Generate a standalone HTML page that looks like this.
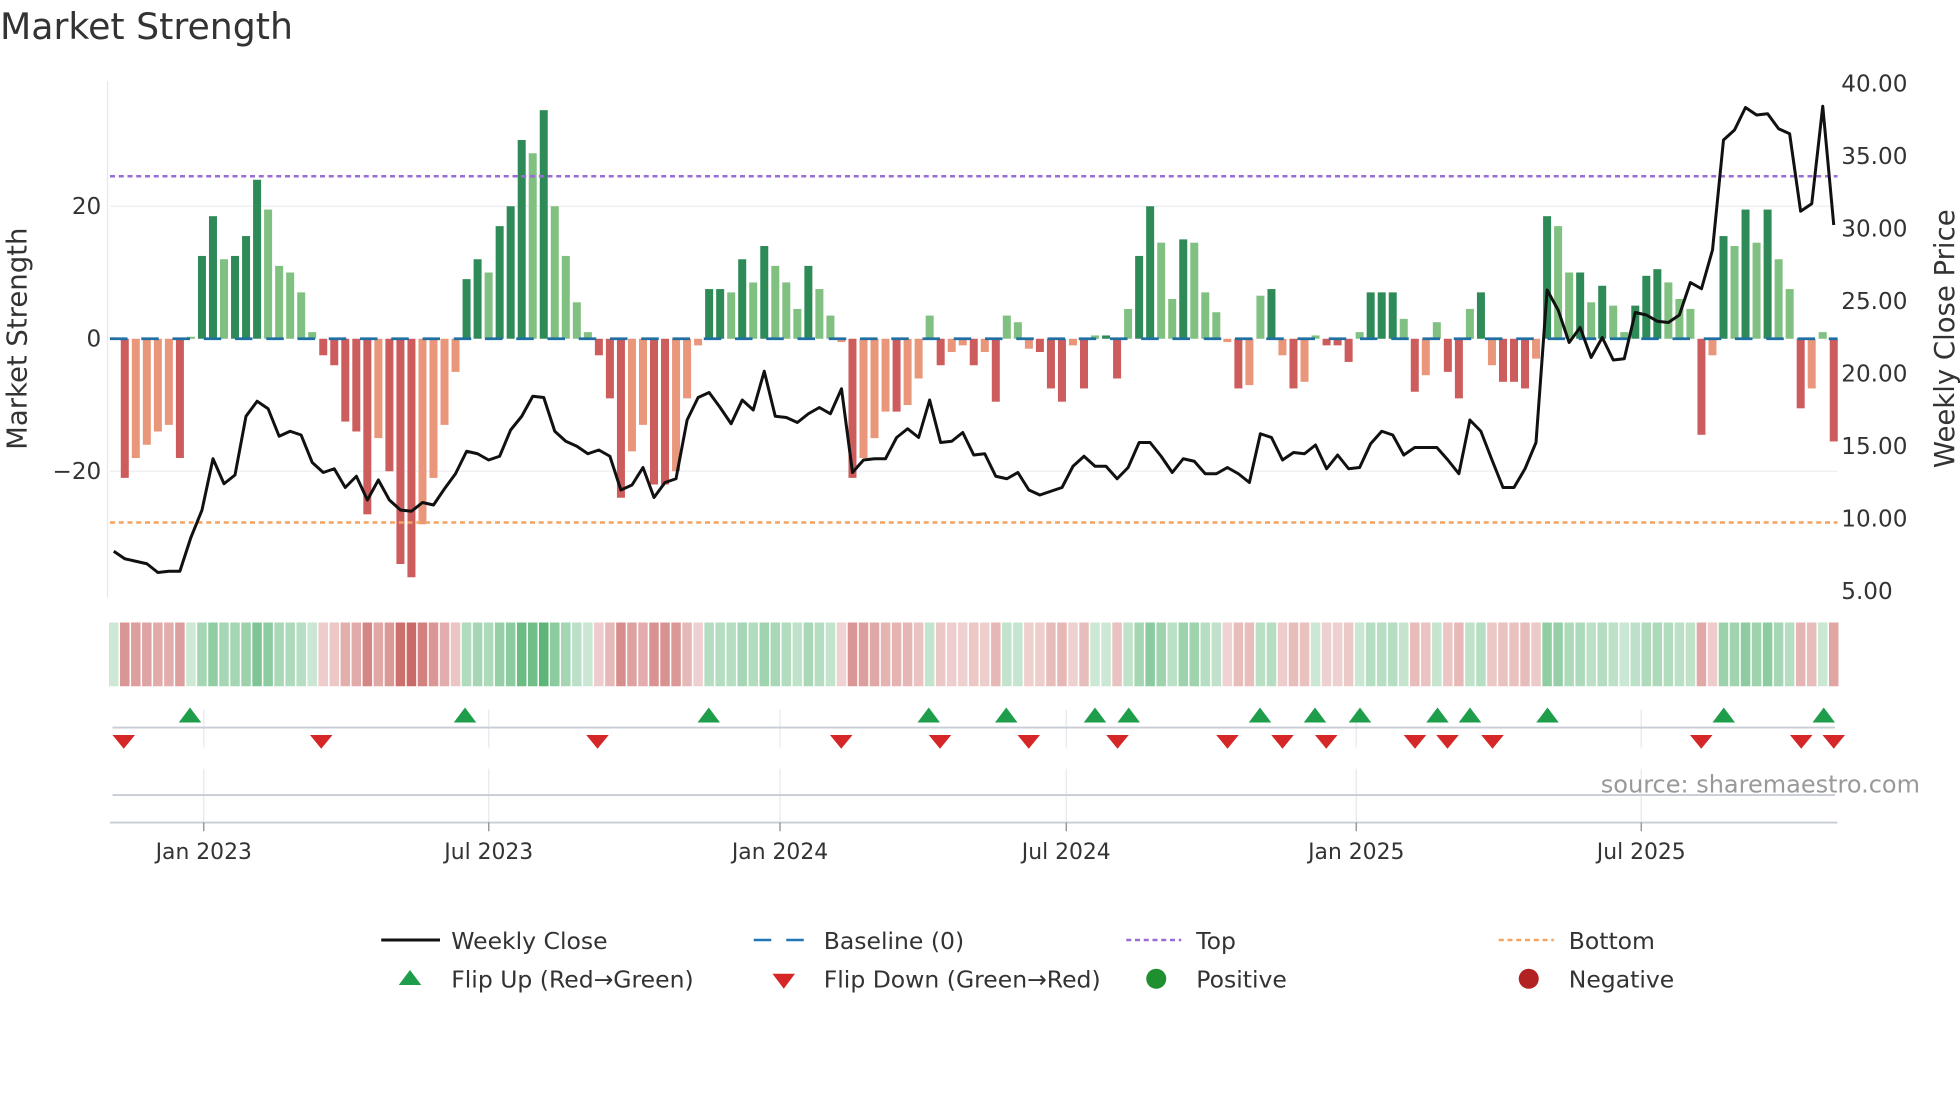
<!DOCTYPE html>
<html><head><meta charset="utf-8"><style>
html,body{margin:0;padding:0;background:#fff;overflow:hidden}
svg{display:block}
text{font-family:"DejaVu Sans","Liberation Sans",sans-serif}
</style></head><body>
<svg id="s" width="1960" height="1102" viewBox="0 0 1568 881.6" xmlns="http://www.w3.org/2000/svg">
<text x="0" y="31" font-size="29" fill="#333">Market Strength</text>
<line x1="86" y1="65" x2="86" y2="478" stroke="#e6e8ee" stroke-width="1"/>
<line x1="88" y1="165" x2="1470" y2="165" stroke="#eceef3" stroke-width="1"/>
<line x1="88" y1="377" x2="1470" y2="377" stroke="#eceef3" stroke-width="1"/>
<g id="bars"></g>
<line x1="88" y1="141" x2="1470" y2="141" stroke="#9b6bd6" stroke-width="2" stroke-dasharray="4,3"/>
<line x1="88" y1="418" x2="1470" y2="418" stroke="#f4a460" stroke-width="2" stroke-dasharray="4,3"/>
<line x1="88" y1="271" x2="1470" y2="271" stroke="#1f6fa4" stroke-width="2.2" stroke-dasharray="14,11"/>
<polyline id="price" fill="none" stroke="#111" stroke-width="2.4" stroke-linejoin="round"/>
<g font-size="18.5" fill="#333">
<text x="81" y="171" text-anchor="end">20</text>
<text x="81" y="277" text-anchor="end">0</text>
<text x="81" y="383" text-anchor="end">−20</text>
<text x="1473" y="73">40.00</text><text x="1473" y="131">35.00</text><text x="1473" y="189">30.00</text><text x="1473" y="247">25.00</text><text x="1473" y="305">20.00</text><text x="1473" y="363">15.00</text><text x="1473" y="421">10.00</text><text x="1473" y="479">5.00</text>
<text transform="translate(21,271) rotate(-90)" text-anchor="middle" font-size="22">Market Strength</text>
<text transform="translate(1563,271) rotate(-90)" text-anchor="middle" font-size="22">Weekly Close Price</text>
</g>
<g id="heat"></g>
<g stroke="#e6e8ee" stroke-width="1">
<line x1="163" y1="568" x2="163" y2="598"/><line x1="391" y1="568" x2="391" y2="598"/><line x1="624" y1="568" x2="624" y2="598"/><line x1="853" y1="568" x2="853" y2="598"/><line x1="1085" y1="568" x2="1085" y2="598"/><line x1="1313" y1="568" x2="1313" y2="598"/>
<line x1="163" y1="615" x2="163" y2="658"/><line x1="391" y1="615" x2="391" y2="658"/><line x1="624" y1="615" x2="624" y2="658"/><line x1="853" y1="615" x2="853" y2="658"/><line x1="1085" y1="615" x2="1085" y2="658"/><line x1="1313" y1="615" x2="1313" y2="658"/>
</g>
<line x1="90" y1="582" x2="1468" y2="582" stroke="#c8ccd4" stroke-width="1.5"/>
<line x1="90" y1="636" x2="1468" y2="636" stroke="#c8ccd4" stroke-width="1.5"/>
<line x1="88" y1="658" x2="1470" y2="658" stroke="#c8ccd4" stroke-width="1.5"/>
<g stroke="#888" stroke-width="1"><line x1="163" y1="658" x2="163" y2="665"/><line x1="391" y1="658" x2="391" y2="665"/><line x1="624" y1="658" x2="624" y2="665"/><line x1="853" y1="658" x2="853" y2="665"/><line x1="1085" y1="658" x2="1085" y2="665"/><line x1="1313" y1="658" x2="1313" y2="665"/></g>
<g id="tri"></g>
<text x="1536" y="634" font-size="19.2" fill="#999" text-anchor="end">source: sharemaestro.com</text>
<g font-size="17.5" fill="#333" text-anchor="middle">
<text x="163" y="687">Jan 2023</text><text x="391" y="687">Jul 2023</text><text x="624" y="687">Jan 2024</text><text x="853" y="687">Jul 2024</text><text x="1085" y="687">Jan 2025</text><text x="1313" y="687">Jul 2025</text>
</g>
<g font-size="18.8" fill="#333">
<line x1="305" y1="752" x2="352" y2="752" stroke="#111" stroke-width="2.4"/><text x="361" y="759">Weekly Close</text>
<line x1="603" y1="752" x2="647" y2="752" stroke="#1f77b4" stroke-width="2" stroke-dasharray="14,12"/><text x="659" y="759">Baseline (0)</text>
<line x1="901" y1="752" x2="945" y2="752" stroke="#9b6bd6" stroke-width="2" stroke-dasharray="4,3"/><text x="957" y="759">Top</text>
<line x1="1199" y1="752" x2="1243" y2="752" stroke="#f4a460" stroke-width="2" stroke-dasharray="4,3"/><text x="1255" y="759">Bottom</text>
<polygon points="319,788 337,788 328,776" fill="#1e9e4a"/><text x="361" y="790">Flip Up (Red→Green)</text>
<polygon points="618,779 636,779 627,791" fill="#d62728"/><text x="659" y="790">Flip Down (Green→Red)</text>
<circle cx="925" cy="783" r="8" fill="#1f8f2f"/><text x="957" y="790">Positive</text>
<circle cx="1223" cy="783" r="8" fill="#b22222"/><text x="1255" y="790">Negative</text>
</g>
</svg>
<script>
var V=[0.2,-21,-18,-16,-14,-13,-18,0.3,12.5,18.5,12,12.5,15.5,24,19.5,11,10,7,1,-2.5,-4,-12.5,-14,-26.5,-15,-20,-34,-36,-28,-21,-13,-5,9,12,10,17,20,30,28,34.5,20,12.5,5.5,1,-2.5,-9,-24,-17,-13,-22,-22,-20,-9,-1,7.5,7.5,7,12,8.5,14,11,8.5,4.5,11,7.5,3.5,-0.5,-21,-18,-15,-11,-11,-10,-6,3.5,-4,-2,-1,-4,-2,-9.5,3.5,2.5,-1.5,-2,-7.5,-9.5,-1,-7.5,0.5,0.5,-6,4.5,12.5,20,14.5,6,15,14.5,7,4,-0.5,-7.5,-7,6.5,7.5,-2.5,-7.5,-6.5,0.5,-1,-1,-3.5,1,7,7,7,3,-8,-5.5,2.5,-5,-9,4.5,7,-4,-6.5,-6.5,-7.5,-3,18.5,17,10,10,5.5,8,5,1,5,9.5,10.5,8.5,6,4.5,-14.5,-2.5,15.5,14,19.5,14.5,19.5,12,7.5,-10.5,-7.5,1,-15.5];
var n=V.length,x0=91,dx=(1467-91)/(n-1),ns="http://www.w3.org/2000/svg";
function el(t,a,p){var e=document.createElementNS(ns,t);for(var k in a)e.setAttribute(k,a[k]);p.appendChild(e);}
var B=document.getElementById('bars'),H=document.getElementById('heat');
for(var i=0;i<n;i++){var v=V[i],x=x0+i*dx,prev=i?V[i-1]:0;
 var up=Math.abs(v)>=Math.abs(prev);var c;
 if(v>=0)c=up?'#2e8b57':'#80c080';else c=up?'#cd5c5c':'#e9967a';
 var h=Math.abs(v)*5.3;el('rect',{x:x-3.2,y:v>=0?271-h:271,width:6.4,height:Math.max(h,0.5),fill:c},B);
 var o=0.25+Math.min(Math.abs(v),36)/36*0.6;
 el('rect',{x:x-3.8,y:498,width:7.6,height:51,fill:v>=0?'#3aa55a':'#c0504d','fill-opacity':o},H);}
var P=[441,447,449,451,458,457,457,430,408,367,387,380,333,321,327,349,345,348,370,378,375,390,381,400,384,400,408,409,402,404,391,379,361,363,368,365,344,333,317,318,345,353,357,363,360,365,392,388,374,398,386,383,336,318,314,326,339,320,328,297,333,334,338,331,326,331,311,378,368,367,367,350,343,350,320,354,353,346,364,363,381,383,378,392,396,393,390,373,365,373,373,383,374,354,354,365,378,367,369,379,379,374,379,386,347,350,368,362,363,356,375,364,375,374,355,345,348,364,358,358,358,368,379,336,345,368,390,390,375,354,232,248,274,262,286,270,288,287,250,252,257,258,252,226,231,200,112,104,86,92,91,103,107,169,163,85,180];
var pts=[];for(var j=0;j<P.length;j++)pts.push((x0+j*(1467-91)/(P.length-1)).toFixed(1)+','+P[j]);
document.getElementById('price').setAttribute('points',pts.join(' '));
var T=document.getElementById('tri');
[152,372,567,743,805,876,903,1008,1052,1088,1150,1176,1238,1379,1459].forEach(function(x){el('polygon',{points:(x-9)+',578 '+(x+9)+',578 '+x+',566',fill:'#1e9e4a'},T);});
[99,257,478,673,752,823,894,982,1026,1061,1132,1158,1194,1361,1441,1467].forEach(function(x){el('polygon',{points:(x-9)+',588 '+(x+9)+',588 '+x+',599',fill:'#d62728'},T);});
</script>
</body></html>
